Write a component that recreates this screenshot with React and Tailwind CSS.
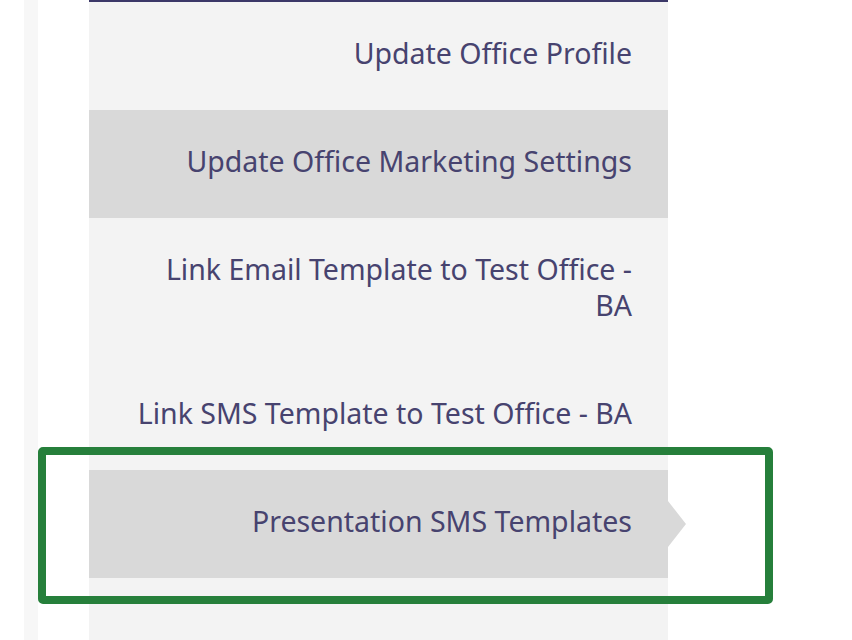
import React from "react";

const items = [
  { label: "Update Office Profile", shade: false },
  { label: "Update Office Marketing Settings", shade: true },
  { label: "Link Email Template to Test Office - BA", shade: false },
  { label: "Link SMS Template to Test Office - BA", shade: false },
  { label: "Presentation SMS Templates", shade: true, active: true },
  { label: "", shade: false },
];

function MenuItem({ item }) {
  return (
    <div
      className={
        "relative pl-[42px] pr-[36px] pt-[33px] pb-[39px] text-right " +
        (item.shade ? "bg-[#d9d9d9]" : "bg-[#f3f3f3]")
      }
    >
      <span className="block min-h-[36px]">{item.label}</span>
      {item.active && (
        <span className="absolute left-full top-1/2 -translate-y-1/2 w-0 h-0 border-y-[23px] border-y-transparent border-l-[18px] border-l-[#d9d9d9]" />
      )}
    </div>
  );
}

export default function App() {
  return (
    <div
      className="relative w-[852px] h-[640px] overflow-hidden bg-white flex"
      style={{ fontFamily: '"Noto Sans", "Open Sans", sans-serif' }}
    >
      <div className="w-[24px] shrink-0" />
      <div className="w-[14px] shrink-0 bg-[#f7f7f7]" />
      <div className="w-[51px] shrink-0" />
      <div className="w-[579px] shrink-0 border-t-2 border-[#3b3868] bg-[#f3f3f3] text-[28.5px] leading-[36px] text-[#47436f]">
        {items.map((item, i) => (
          <MenuItem key={i} item={item} />
        ))}
      </div>

      {/* highlight annotation */}
      <div className="absolute left-[38px] top-[447px] w-[735px] h-[157px] border-[8px] border-[#267f3b] rounded-[5px] pointer-events-none" />
    </div>
  );
}
